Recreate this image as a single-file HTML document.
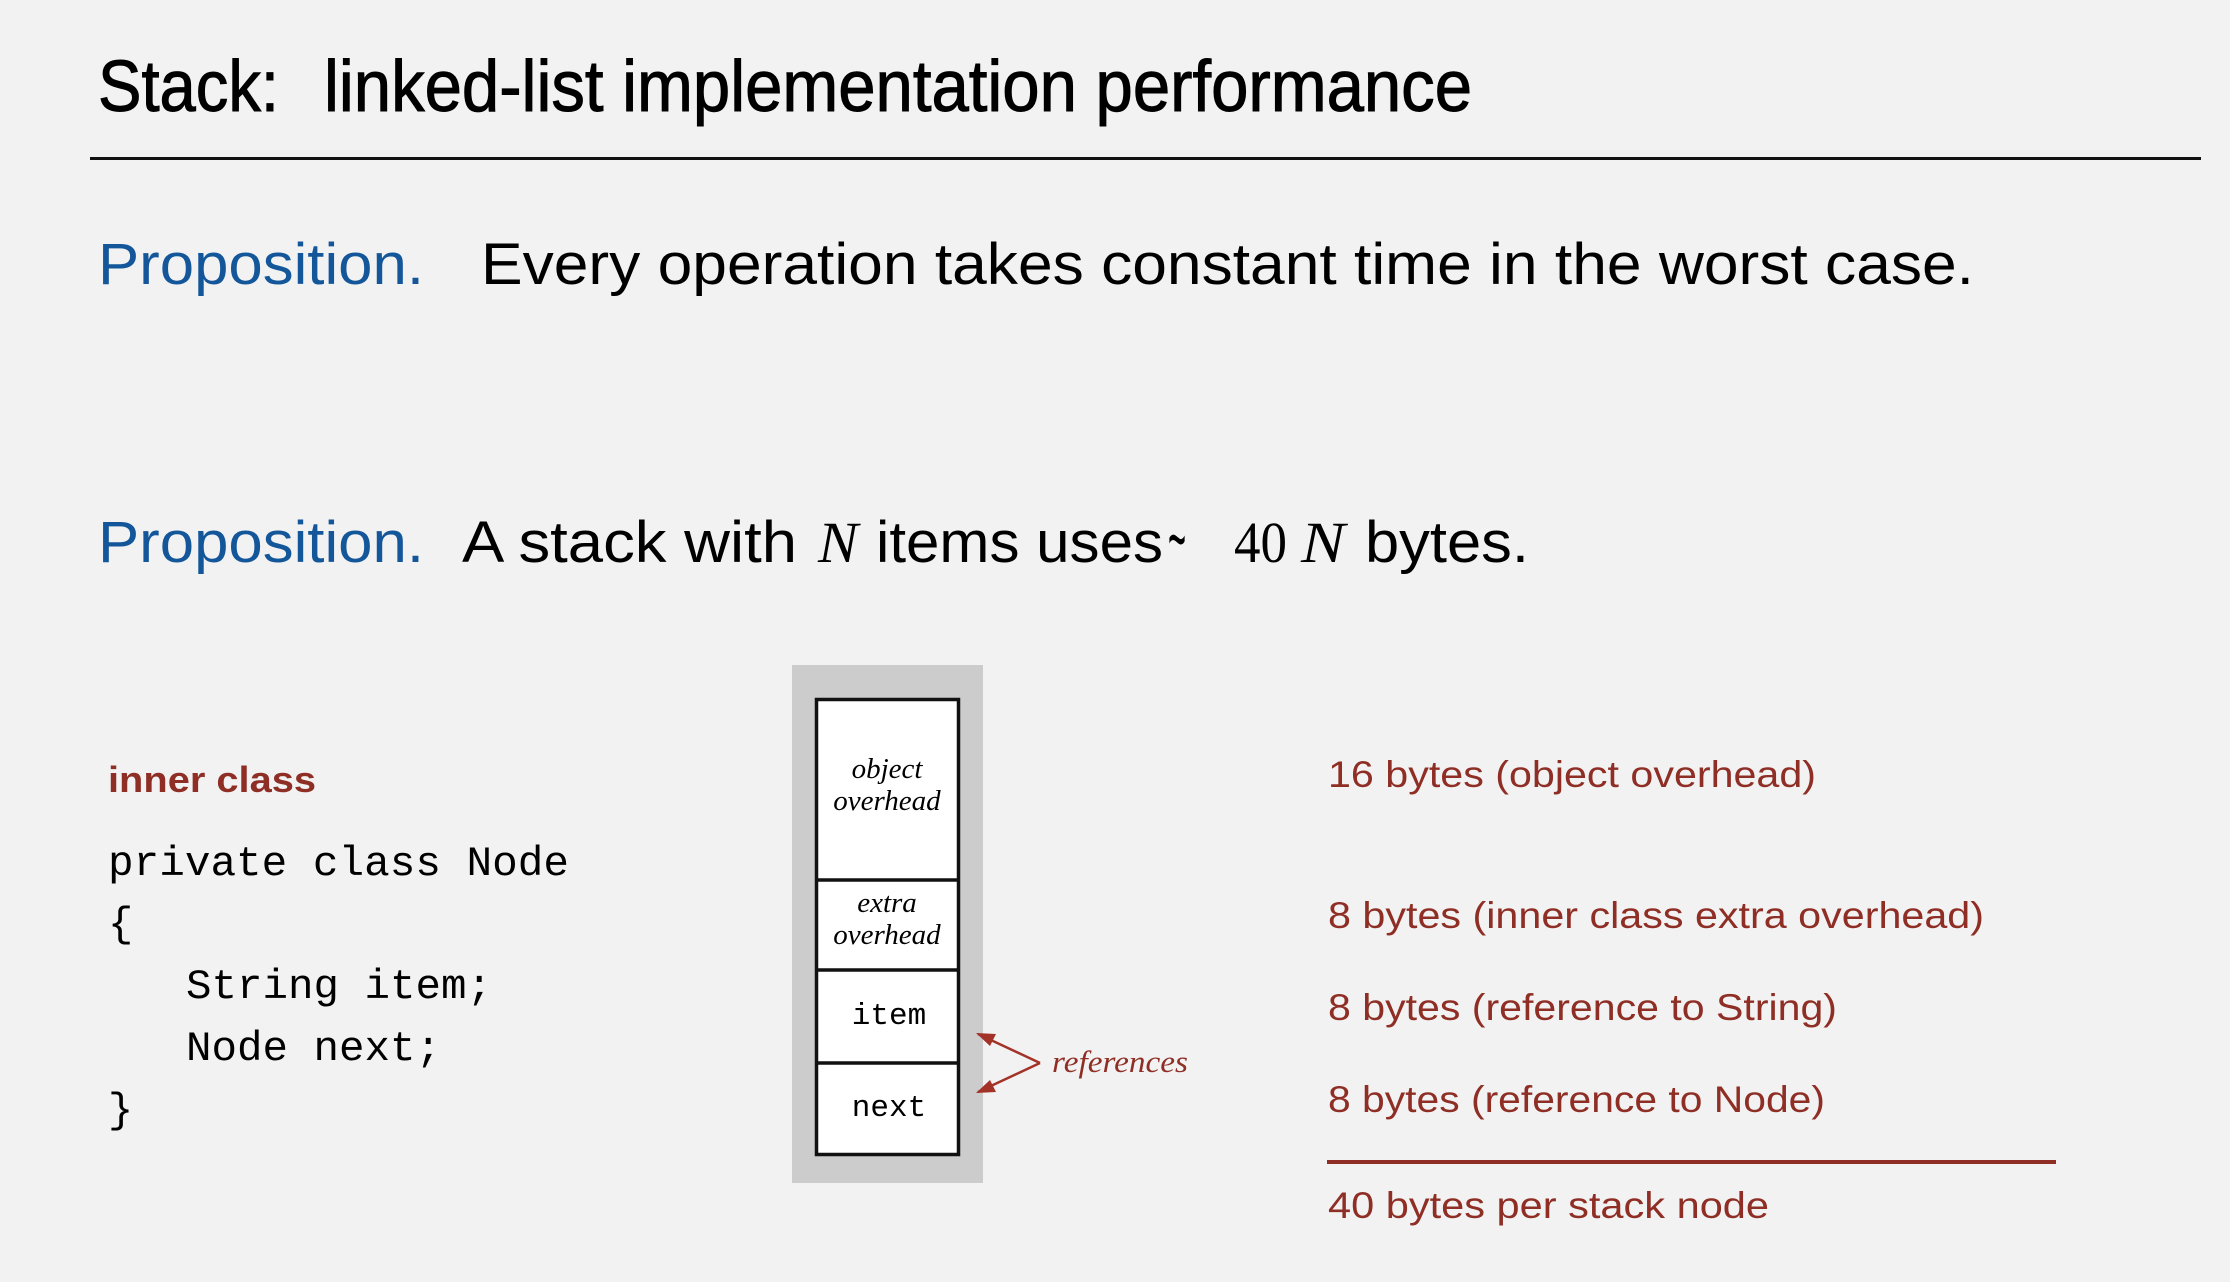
<!DOCTYPE html>
<html><head><meta charset="utf-8"><style>
html,body{margin:0;padding:0;background:#f2f2f2;}
svg{display:block;}
.s{font-family:"Liberation Sans",sans-serif;}
.m{font-family:"Liberation Mono",monospace;}
.i{font-family:"Liberation Serif",serif;font-style:italic;}
.r{fill:#8e2e25;}
.b{fill:#14569a;}
</style></head><body>
<svg width="2230" height="1282" viewBox="0 0 2230 1282" xmlns="http://www.w3.org/2000/svg">
<rect width="2230" height="1282" fill="#f2f2f2"/>
<text class="s" x="98" y="111" font-size="72" textLength="181" lengthAdjust="spacingAndGlyphs" stroke="#000" stroke-width="1">Stack:</text>
<text class="s" x="324" y="111" font-size="72" textLength="1148" lengthAdjust="spacingAndGlyphs" stroke="#000" stroke-width="1">linked-list implementation performance</text>
<rect x="90" y="157" width="2111" height="3" fill="#111"/>

<text class="s b" x="98" y="284" font-size="58" textLength="326" lengthAdjust="spacingAndGlyphs">Proposition.</text>
<text class="s" x="481" y="284" font-size="58" textLength="1493" lengthAdjust="spacingAndGlyphs">Every operation takes constant time in the worst case.</text>

<text class="s b" x="98" y="562" font-size="58" textLength="326" lengthAdjust="spacingAndGlyphs">Proposition.</text>
<text class="s" x="462" y="562" font-size="58" textLength="335" lengthAdjust="spacingAndGlyphs">A stack with</text>
<text class="i" x="818" y="562" font-size="58" textLength="40" lengthAdjust="spacingAndGlyphs">N</text>
<text class="s" x="876" y="562" font-size="58" textLength="287" lengthAdjust="spacingAndGlyphs">items uses</text>
<text class="s" x="1168" y="566" font-size="80" textLength="18" lengthAdjust="spacingAndGlyphs">~</text>
<text x="1234" y="562" font-size="58" font-family="Liberation Serif, serif" textLength="53" lengthAdjust="spacingAndGlyphs">40</text>
<text class="i" x="1301" y="562" font-size="58" textLength="44" lengthAdjust="spacingAndGlyphs">N</text>
<text class="s" x="1365" y="562" font-size="58" textLength="164" lengthAdjust="spacingAndGlyphs">bytes.</text>

<text class="s r" x="108" y="792" font-size="36" font-weight="bold" textLength="208" lengthAdjust="spacingAndGlyphs">inner class</text>
<g class="m" font-size="42">
<text x="108" y="875" textLength="461" lengthAdjust="spacingAndGlyphs">private class Node</text>
<text x="108" y="936">{</text>
<text x="186" y="998" textLength="306" lengthAdjust="spacingAndGlyphs">String item;</text>
<text x="186" y="1060" textLength="255" lengthAdjust="spacingAndGlyphs">Node next;</text>
<text x="108" y="1122">}</text>
</g>

<rect x="792" y="665" width="191" height="518" fill="#cccccc"/>
<rect x="816.5" y="699.5" width="142" height="455" fill="#fff" stroke="#111" stroke-width="3.5"/>
<line x1="816" y1="880" x2="959" y2="880" stroke="#111" stroke-width="3.5"/>
<line x1="816" y1="970" x2="959" y2="970" stroke="#111" stroke-width="3.5"/>
<line x1="816" y1="1063" x2="959" y2="1063" stroke="#111" stroke-width="3.5"/>
<g class="i" font-size="29" text-anchor="middle">
<text x="887" y="778">object</text>
<text x="887" y="810">overhead</text>
<text x="887" y="912">extra</text>
<text x="887" y="944">overhead</text>
</g>
<g class="m" font-size="31" text-anchor="middle">
<text x="889" y="1024">item</text>
<text x="889" y="1116">next</text>
</g>
<g stroke="#a33328" stroke-width="2.5" fill="none">
<path d="M1040 1063 L978 1034"/>
<path d="M1040 1063 L978 1092"/>
</g>
<path d="M976 1033 L996 1034 L990 1046 Z" fill="#a33328"/>
<path d="M976 1093 L990 1080 L996 1092 Z" fill="#a33328"/>
<text class="i r" x="1052" y="1072" font-size="31" textLength="136" lengthAdjust="spacingAndGlyphs">references</text>

<g class="s r" font-size="37">
<text x="1328" y="787" textLength="488" lengthAdjust="spacingAndGlyphs">16 bytes (object overhead)</text>
<text x="1328" y="928" textLength="656" lengthAdjust="spacingAndGlyphs">8 bytes (inner class extra overhead)</text>
<text x="1328" y="1020" textLength="509" lengthAdjust="spacingAndGlyphs">8 bytes (reference to String)</text>
<text x="1328" y="1112" textLength="497" lengthAdjust="spacingAndGlyphs">8 bytes (reference to Node)</text>
<text x="1328" y="1218" textLength="441" lengthAdjust="spacingAndGlyphs">40 bytes per stack node</text>
</g>
<rect x="1327" y="1160" width="729" height="4" fill="#8e2e25"/>
</svg>
</body></html>
